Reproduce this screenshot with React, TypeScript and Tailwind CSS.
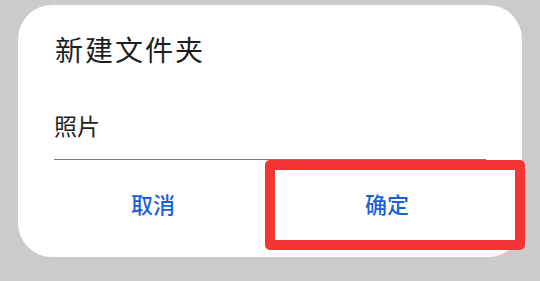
export default function App() {
  return (
    <div className="w-[540px] h-[281px] bg-[#cbcbcb] pt-[5px] px-[18px] font-['Noto_Sans_CJK_SC',sans-serif]">
      <div className="relative h-[252px] rounded-[34px] bg-white flex flex-col">
        <h1 className="ml-[37px] pt-[29px] text-[28px] leading-[30px] tracking-[2px] text-[#1f1f1f]">
          新建文件夹
        </h1>

        <div className="mx-[36px] mt-[46px] pb-[19px] border-b border-[#7a7a7a]">
          <p className="text-[23px] leading-[30px] text-[#1f1f1f]">照片</p>
        </div>

        <div className="flex px-[18px] h-[87px]">
          <button className="flex-1 flex items-center justify-center text-[22px] font-medium text-[#1d5fd6]">
            取消
          </button>
          <button className="flex-1 flex items-center justify-center text-[22px] font-medium text-[#1d5fd6]">
            确定
          </button>
        </div>

        {/* highlight box over the confirm button */}
        <div className="absolute left-[247px] top-[155px] w-[260px] h-[90px] border-[10px] border-[#f43535] rounded-[5px]" />
      </div>
    </div>
  )
}
